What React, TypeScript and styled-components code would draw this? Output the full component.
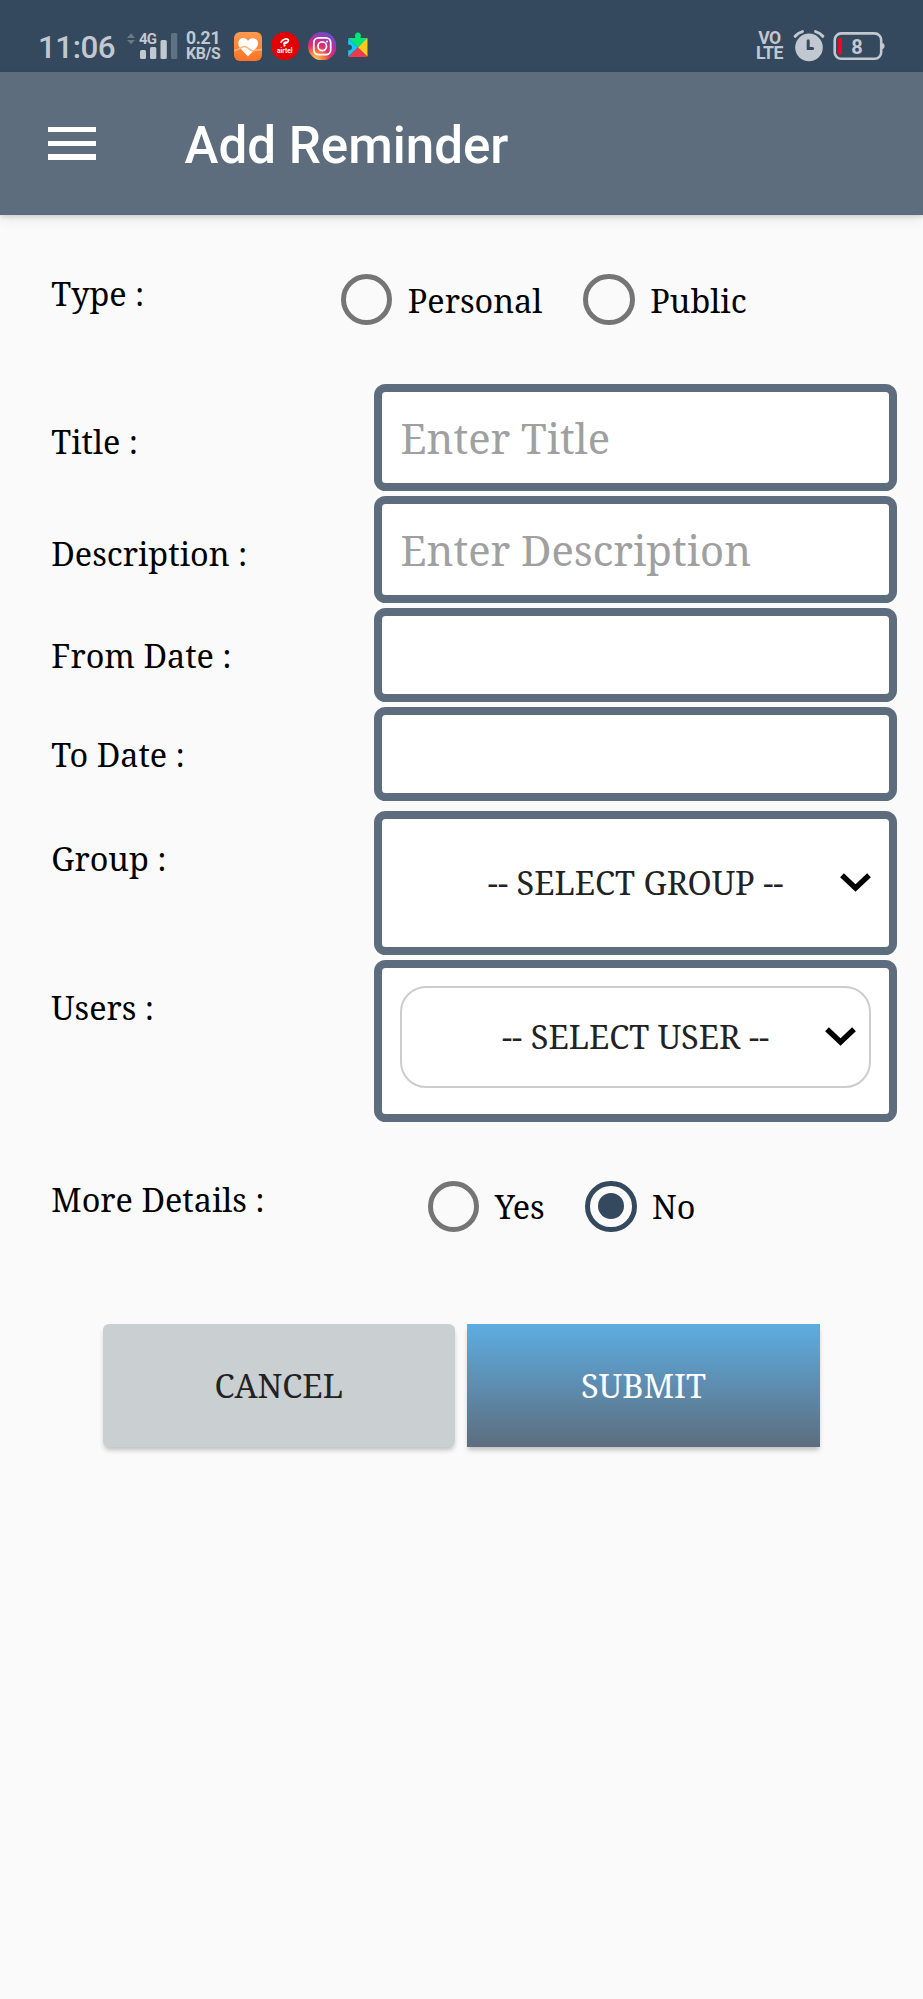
import React, { useState } from 'react';
import styled, { createGlobalStyle } from 'styled-components';

const GlobalStyle = createGlobalStyle`
  * { box-sizing: border-box; }
  body { margin: 0; background: #fafafa; }
  button, input { font: inherit; }
`;

const serif = "'Noto Serif', 'DejaVu Serif Condensed', 'Liberation Serif', serif";
const sans = "Roboto, 'Liberation Sans', sans-serif";
const slate = '#5d6d7e';
const navy = '#34495e';
const statusInk = '#c2c8cf';

const Screen = styled.div`
  min-height: 1999px;
  background: #fafafa;
  color: #000;
  font-family: ${serif};
  font-size: 32.4px;
  line-height: 44px;
`;

/* Status bar */
const StatusBar = styled.header`
  display: flex;
  justify-content: space-between;
  height: 71.5px;
  padding: 28px 38px 0 38px;
  background: ${navy};
  color: ${statusInk};
  font-family: ${sans};
`;

const StatusGroup = styled.div`
  display: flex;
  height: 36px;
  align-items: center;
`;

const Clock = styled.div`
  width: 88px;
  padding-top: 3px;
  font-size: 31.4px;
  font-weight: 500;
  line-height: 36px;
  letter-spacing: -0.5px;
  white-space: nowrap;
`;

const Stack = styled.div<{ $width: number; $align?: string }>`
  display: flex;
  flex-direction: column;
  width: ${p => p.$width}px;
  align-items: ${p => p.$align ?? 'flex-start'};
  font-weight: 700;
  white-space: nowrap;
`;

const StackLine = styled.span<{ $size: number; $spacing?: number }>`
  height: 15px;
  font-size: ${p => p.$size}px;
  line-height: 15px;
  letter-spacing: ${p => p.$spacing ?? 0}px;
`;

const Signal = styled.div`
  position: relative;
  width: 60px;
  height: 36px;
`;

const NetworkTag = styled.span`
  position: absolute;
  left: 13px;
  top: 3px;
  font-size: 15px;
  font-weight: 700;
  line-height: 16px;
  letter-spacing: -0.8px;
`;

const AppIcons = styled.div`
  display: flex;
  align-items: center;
  gap: 8.5px;
`;

const Battery = styled.div`
  position: relative;
  width: 52px;
  height: 36px;
`;

const BatteryLevel = styled.span`
  position: absolute;
  left: 0;
  top: 5px;
  width: 48px;
  text-align: center;
  font-size: 20px;
  font-weight: 700;
  line-height: 28px;
`;

/* App bar */
const AppBar = styled.div`
  display: flex;
  height: 143.5px;
  align-items: center;
  gap: 88.5px;
  padding-left: 48px;
  background: ${slate};
  color: #fff;
  box-shadow: 0 2px 4px rgba(0, 0, 0, 0.12), 0 5px 12px rgba(0, 0, 0, 0.07);
`;

const MenuButton = styled.button`
  display: flex;
  flex-direction: column;
  gap: 8.5px;
  width: 48px;
  padding: 0;
  border: 0;
  background: none;
`;

const MenuLine = styled.span`
  height: 5.4px;
  background: #fff;
`;

const Title = styled.h1`
  margin: 0;
  padding-top: 6px;
  font-family: ${sans};
  font-size: 51.1px;
  font-weight: 500;
  line-height: 60px;
`;

/* Form */
const Form = styled.form`
  display: flex;
  flex-direction: column;
`;

const Row = styled.div<{ $height: number; $pad: number }>`
  display: flex;
  height: ${p => p.$height}px;
  padding-left: 51.3px;

  > label {
    padding-top: ${p => p.$pad}px;
  }
`;

const Label = styled.label<{ $width: number }>`
  flex: none;
  width: ${p => p.$width}px;
  white-space: nowrap;
`;

const frame = `
  width: 523.2px;
  border: 8px solid ${slate};
  border-radius: 11.5px;
  background: #fff;
`;

const TextField = styled.input<{ $height: number }>`
  ${frame}
  height: ${p => p.$height}px;
  padding: 0 18.5px;
  outline: none;
  font-family: ${serif};
  font-size: 41.8px;
  color: #222;

  &::placeholder {
    color: #a0a0a0;
    opacity: 1;
  }
`;

const SelectFrame = styled.div<{ $height: number }>`
  ${frame}
  height: ${p => p.$height}px;
  padding: 18px;
`;

const Select = styled.button<{ $outlined?: boolean }>`
  display: grid;
  grid-template-columns: 31px 1fr 31px;
  width: 100%;
  height: ${p => (p.$outlined ? '102px' : '92px')};
  align-items: center;
  padding: ${p => (p.$outlined ? '0 13px' : '0')};
  border: ${p => (p.$outlined ? '2px solid #cdcdcd' : '0')};
  border-radius: ${p => (p.$outlined ? '26px' : '0')};
  background: none;
  color: #222;
  font-family: ${serif};
  font-size: 32.6px;
  line-height: 44px;
`;

const SelectText = styled.span`
  grid-column: 2;
  text-align: center;
  white-space: nowrap;
`;

const Option = styled.button<{ $width: number }>`
  display: flex;
  width: ${p => p.$width}px;
  height: 52px;
  align-items: center;
  gap: 15.5px;
  padding: 0;
  border: 0;
  background: none;
  color: #000;
  font-family: ${serif};
  line-height: 44px;
`;

const Options = styled.div`
  display: flex;
  padding-top: 58.7px;
`;

const Ring = styled.span<{ $on: boolean }>`
  display: grid;
  flex: none;
  width: 51.3px;
  height: 51.3px;
  place-items: center;
  border: 5.2px solid ${p => (p.$on ? navy : '#757575')};
  border-radius: 50%;

  &::after {
    content: '';
    width: 26px;
    height: 26px;
    border-radius: 50%;
    background: ${p => (p.$on ? navy : 'transparent')};
  }
`;

const Actions = styled.div`
  display: flex;
  gap: 12.5px;
  padding-left: 103px;
`;

const Action = styled.button<{ $primary?: boolean }>`
  width: ${p => (p.$primary ? 353 : 351.5)}px;
  height: 123px;
  padding: 2px 0 0;
  border: 0;
  border-radius: ${p => (p.$primary ? 0 : 6)}px;
  background: ${p => (p.$primary ? `linear-gradient(#5dade2, ${slate})` : '#cacfd2')};
  box-shadow: 0 4px 5px -1px rgba(0, 0, 0, 0.24);
  color: ${p => (p.$primary ? '#fff' : '#222')};
  font-family: ${serif};
  font-size: 32.6px;
`;

function Chevron() {
  return (
    <svg width="31" height="20" viewBox="0 0 31 20">
      <path d="M2 2.2 L15.5 15 L29 2.2" fill="none" stroke="#000" strokeWidth="5.4" />
    </svg>
  );
}

function SignalBars() {
  return (
    <svg width="60" height="36" viewBox="0 0 60 36">
      <path d="M1 10 L5 5.3 L9 10Z M1 12 L5 16.2 L9 12Z" fill="#687988" />
      <rect x="14" y="22" width="6" height="9" rx="1.5" fill={statusInk} />
      <rect x="24" y="19" width="6.3" height="12" rx="1.5" fill={statusInk} />
      <rect x="34.5" y="12" width="6.3" height="19" rx="1.5" fill={statusInk} />
      <rect x="45" y="5" width="6.3" height="26" rx="1.5" fill="#5f7182" />
    </svg>
  );
}

function HeartIcon() {
  return (
    <svg width="28" height="29" viewBox="0 0 28 29">
      <defs>
        <linearGradient id="heartBg" x1="0" y1="0" x2="0" y2="1">
          <stop offset="0" stopColor="#fb9a50" />
          <stop offset="1" stopColor="#fd7425" />
        </linearGradient>
      </defs>
      <rect width="28" height="29" rx="6" fill="url(#heartBg)" />
      <path d="M14 24.5 L5.6 15.5 C3 11.5 4.6 6.2 9 6 C11.5 6 13.2 7.4 14 9 C14.8 7.4 16.8 6 19.2 6.2 C23.8 6.6 25.4 11.6 22.6 15.5Z" fill="#fff" />
      <path d="M0 18.5 C5 18.5 6.5 14.5 10.5 14.5 C14.5 14.5 15 19 19 18.7 C21 18.5 21.5 17.6 28 17.6" fill="none" stroke="#fcb77e" strokeWidth="1.6" />
    </svg>
  );
}

const AirtelBadge = styled.div`
  display: flex;
  flex-direction: column;
  width: 28.5px;
  height: 28.5px;
  align-items: center;
  padding-top: 6px;
  border-radius: 50%;
  background: #e40000;
  color: #fff;
  font-size: 6.6px;
  font-weight: 700;
  line-height: 8px;
`;

function AirtelIcon() {
  return (
    <AirtelBadge>
      <svg width="10" height="9" viewBox="0 0 10 9">
        <path d="M1 4.2 C2.5 1.6 6.5 0 8 1.6 C9.4 3.4 6.6 5.4 4 6 M4 6 C3.4 4.8 6 3.4 6.5 4.4 M4.2 7.9 L4.8 7.5" fill="none" stroke="#fff" strokeWidth="1.6" strokeLinecap="round" />
      </svg>
      airtel
    </AirtelBadge>
  );
}

function InstagramIcon() {
  return (
    <svg width="28.5" height="28.5" viewBox="0 0 28 28">
      <defs>
        <radialGradient id="insta" cx="0.25" cy="1" r="1.1">
          <stop offset="0" stopColor="#fed373" />
          <stop offset="0.25" stopColor="#f8873f" />
          <stop offset="0.5" stopColor="#dd2f6d" />
          <stop offset="0.75" stopColor="#a934a5" />
          <stop offset="1" stopColor="#5c51d2" />
        </radialGradient>
      </defs>
      <circle cx="14" cy="14" r="14" fill="url(#insta)" />
      <rect x="5.7" y="5.7" width="16.6" height="16.6" rx="4.8" fill="none" stroke="#fff" strokeWidth="1.7" />
      <circle cx="14" cy="14" r="4.2" fill="none" stroke="#fff" strokeWidth="1.7" />
      <circle cx="18.7" cy="9.4" r="1" fill="#fff" />
    </svg>
  );
}

function PuzzleIcon() {
  return (
    <svg width="26" height="28" viewBox="0 0 26 28">
      <defs>
        <clipPath id="puzzle">
          <path d="M3.2 7 Q3.2 5.9 4.3 5.9 H10.2 V4.8 A3 3 0 1 1 15.6 4.8 V5.9 H21.6 Q22.6 5.9 22.6 7 V24 Q22.6 25 21.6 25 H4.3 Q3.2 25 3.2 24 V18.2 H5 A2.8 2.8 0 0 0 5 12.8 H3.2Z" />
        </clipPath>
      </defs>
      <g clipPath="url(#puzzle)">
        <path d="M0 0 H26 V3 L12.9 15.5 L3 5.9Z" fill="#00e676" />
        <path d="M3 5.9 L12.9 15.5 L3 25 H0 V5Z" fill="#19c3fb" />
        <path d="M22.8 5.6 L12.9 15.5 L22.8 25Z" fill="#ffca1c" />
        <path d="M3 25.2 L12.9 15.5 L22.8 25.2Z" fill="#f5384a" />
      </g>
    </svg>
  );
}

function AlarmIcon() {
  return (
    <svg width="32" height="32" viewBox="0 0 32 32">
      <circle cx="16" cy="17.4" r="13.8" fill={statusInk} />
      <path d="M2.2 6.3 Q5 2.8 9.4 1.6 M29.8 6.3 Q27 2.8 22.6 1.6" fill="none" stroke={navy} strokeWidth="5.6" strokeLinecap="round" />
      <path d="M2.2 6.3 Q5 2.8 9.4 1.6 M29.8 6.3 Q27 2.8 22.6 1.6" fill="none" stroke={statusInk} strokeWidth="3" strokeLinecap="round" />
      <path d="M15.2 10.8 V18.4 H19.6" fill="none" stroke={navy} strokeWidth="3" strokeLinecap="round" />
    </svg>
  );
}

function BatteryShape() {
  return (
    <svg width="52" height="36" viewBox="0 0 52 36">
      <rect x="1.7" y="5.4" width="46.5" height="25.4" rx="6.5" fill="none" stroke={statusInk} strokeWidth="2.6" />
      <path d="M48.5 15 Q51.6 15 51.6 18.1 Q51.6 21.2 48.5 21.2Z" fill={statusInk} />
      <rect x="5.2" y="10" width="3.8" height="16.5" rx="0.8" fill="#ff0021" />
    </svg>
  );
}

const RightStatus = styled(StatusGroup)`
  gap: 8.5px;
`;

interface RadioProps {
  options: [string, string];
  value: string | null;
  width: number;
  onChange: (v: string) => void;
}

function RadioGroup({ options, value, width, onChange }: RadioProps) {
  return (
    <Options role="radiogroup">
      {options.map(o => (
        <Option key={o} type="button" role="radio" aria-checked={value === o} $width={width} onClick={() => onChange(o)}>
          <Ring $on={value === o} />
          {o}
        </Option>
      ))}
    </Options>
  );
}

const LABEL = 322.7;

export default function App() {
  const [type, setType] = useState<string | null>(null);
  const [details, setDetails] = useState<string | null>('No');

  return (
    <>
      <GlobalStyle />
      <Screen>
        <StatusBar>
          <StatusGroup>
            <Clock>11:06</Clock>
            <Signal>
              <SignalBars />
              <NetworkTag>4G</NetworkTag>
            </Signal>
            <Stack $width={48}>
              <StackLine $size={17.6} $spacing={-0.3}>0.21</StackLine>
              <StackLine $size={15.8} $spacing={-0.3}>KB/S</StackLine>
            </Stack>
            <AppIcons>
              <HeartIcon />
              <AirtelIcon />
              <InstagramIcon />
              <PuzzleIcon />
            </AppIcons>
          </StatusGroup>
          <RightStatus>
            <Stack $width={29} $align="center">
              <StackLine $size={17.6} $spacing={-0.6}>VO</StackLine>
              <StackLine $size={17.6} $spacing={-0.4}>LTE</StackLine>
            </Stack>
            <AlarmIcon />
            <Battery>
              <BatteryShape />
              <BatteryLevel>8</BatteryLevel>
            </Battery>
          </RightStatus>
        </StatusBar>

        <AppBar>
          <MenuButton aria-label="Menu">
            <MenuLine />
            <MenuLine />
            <MenuLine />
          </MenuButton>
          <Title>Add Reminder</Title>
        </AppBar>

        <Form onSubmit={e => e.preventDefault()}>
          <Row $height={169} $pad={56.2}>
            <Label $width={289.7}>Type :</Label>
            <RadioGroup options={['Personal', 'Public']} value={type} width={242.5} onChange={setType} />
          </Row>
          <Row $height={112} $pad={35.4}>
            <Label $width={LABEL} htmlFor="title">Title :</Label>
            <TextField id="title" $height={107} placeholder="Enter Title" />
          </Row>
          <Row $height={112} $pad={35.4}>
            <Label $width={LABEL} htmlFor="description">Description :</Label>
            <TextField id="description" $height={107} placeholder="Enter Description" />
          </Row>
          <Row $height={99} $pad={25.3}>
            <Label $width={LABEL} htmlFor="from">From Date :</Label>
            <TextField id="from" $height={94} />
          </Row>
          <Row $height={104.3} $pad={25.3}>
            <Label $width={LABEL} htmlFor="to">To Date :</Label>
            <TextField id="to" $height={94} />
          </Row>
          <Row $height={148.7} $pad={25.1}>
            <Label $width={LABEL}>Group :</Label>
            <SelectFrame $height={143.4}>
              <Select type="button">
                <SelectText>-- SELECT GROUP --</SelectText>
                <Chevron />
              </Select>
            </SelectFrame>
          </Row>
          <Row $height={161.7} $pad={25.4}>
            <Label $width={LABEL}>Users :</Label>
            <SelectFrame $height={161.7}>
              <Select type="button" $outlined>
                <SelectText>-- SELECT USER --</SelectText>
                <Chevron />
              </Select>
            </SelectFrame>
          </Row>
          <Row $height={202.3} $pad={55.6}>
            <Label $width={376.7}>More Details :</Label>
            <RadioGroup options={['Yes', 'No']} value={details} width={157.3} onChange={setDetails} />
          </Row>
          <Actions>
            <Action type="button">CANCEL</Action>
            <Action type="submit" $primary>SUBMIT</Action>
          </Actions>
        </Form>
      </Screen>
    </>
  );
}
